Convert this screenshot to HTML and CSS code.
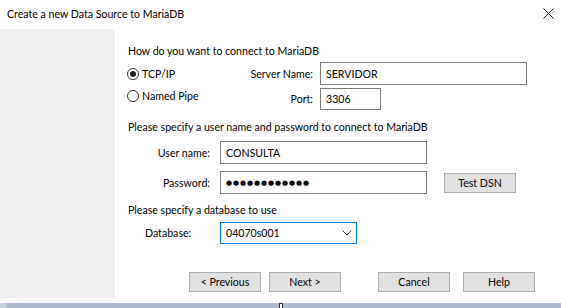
FILE: index.html
```html
<!DOCTYPE html>
<html>
<head>
<meta charset="utf-8">
<link rel="stylesheet" href="styles.css">
</head>
<body>
<div class="window">
  <div class="titlebar">
    <span class="title">Create a new Data Source to MariaDB</span>
    <svg class="close" width="11" height="11" viewBox="0 0 11 11"><path d="M0.5 0.5L10.5 10.5M10.5 0.5L0.5 10.5" stroke="#1a1a1a" stroke-width="1"/></svg>
  </div>
  <div class="main">
    <div class="side"></div>
    <div class="content">
      <p class="q q1">How do you want to connect to MariaDB</p>
      <div class="conn">
        <label class="radio"><span class="circle checked"></span>TCP/IP</label>
        <span class="lbl">Server Name:</span>
        <div class="field server">SERVIDOR</div>
        <label class="radio radio2"><span class="circle"></span>Named Pipe</label>
        <span class="lbl">Port:</span>
        <div class="field port">3306</div>
      </div>
      <p class="q q2">Please specify a user name and password to connect to MariaDB</p>
      <div class="cred">
        <span class="lbl">User name:</span>
        <div class="field user">CONSULTA</div>
        <span></span>
        <span class="lbl">Password:</span>
        <div class="field pass"><span class="dots">●●●●●●●●●●●●</span></div>
        <button class="btn test">Test DSN</button>
      </div>
      <p class="q q3">Please specify a database to use</p>
      <div class="dbrow">
        <span class="dblbl">Database:</span>
        <div class="select"><span>04070s001</span><svg width="10" height="6" viewBox="0 0 10 6"><path d="M0.5 0.5L5 5L9.5 0.5" fill="none" stroke="#333" stroke-width="1"/></svg></div>
      </div>
      <div class="buttons">
        <button class="btn">&lt; Previous</button>
        <button class="btn">Next &gt;</button>
        <button class="btn cancel">Cancel</button>
        <button class="btn help">Help</button>
      </div>
    </div>
  </div>
  <div class="strip"><span class="light"></span><span class="marker"></span></div>
</div>
</body>
</html>
```

FILE: styles.css
```css
* { box-sizing: border-box; }
html, body { margin: 0; padding: 0; }
body {
  width: 561px;
  height: 308px;
  overflow: hidden;
  background: #fff;
  font-family: Lato, "Liberation Sans", sans-serif;
  font-size: 10.6px;
  color: #000;
}
.window { width: 561px; height: 308px; display: flex; flex-direction: column; }
.titlebar {
  height: 29px;
  display: flex;
  align-items: center;
  justify-content: space-between;
  padding: 0 7px 2px 7px;
}
.title { font-size: 10.6px; }
.main { height: 274px; display: flex; }
.side { width: 115px; height: 269px; background: #f0f0f0; flex: none; }
.content { flex: 1; display: flex; flex-direction: column; }
.q { margin: 0; line-height: 16px; height: 16px; padding-left: 13px; }
.q1 { margin-top: 14px; }
.conn {
  margin-top: 3px;
  padding-left: 12px;
  display: grid;
  grid-template-columns: 110px 83px 207px;
  grid-template-rows: 23px 22px;
  row-gap: 3px;
  align-items: center;
}
.radio { display: flex; align-items: center; gap: 3px; }
.radio2 { margin-bottom: 7px; }
.circle {
  width: 12px; height: 12px;
  border: 1px solid #333;
  border-radius: 50%;
  display: flex; align-items: center; justify-content: center;
  background: #fff;
}
.circle.checked::after {
  content: "";
  width: 6px; height: 6px;
  border-radius: 50%;
  background: #1a1a1a;
}
.lbl { text-align: right; padding-right: 7px; }
.field {
  height: 100%;
  border: 1px solid #7a7a7a;
  background: #fff;
  display: flex;
  align-items: center;
  padding-left: 5px;
}
.port { width: 61px; }
.q2 { margin-top: 9px; }
.cred {
  margin-top: 6px;
  display: grid;
  grid-template-columns: 95px 207px 72px;
  grid-template-rows: 23px 23px;
  column-gap: 10px;
  row-gap: 7px;
  align-items: center;
}
.cred .lbl { padding-right: 0; }
.cred .btn { margin-left: 7px; }
.dots {
  font-family: "DejaVu Sans", sans-serif;
  font-size: 7px;
  letter-spacing: 0.9px;
}
.btn {
  width: 72px;
  height: 20px;
  border: 1px solid #adadad;
  background: #e1e1e1;
  font-family: inherit;
  font-size: 10.6px;
  color: #000;
  padding: 0;
  margin: 0;
}
.q3 { margin-top: 8px; }
.dbrow {
  margin-top: 4px;
  display: grid;
  grid-template-columns: 95px 137px;
  column-gap: 10px;
  height: 22px;
  align-items: center;
}
.dblbl { padding-left: 30px; }
.select {
  height: 22px;
  border: 1px solid #0078d7;
  display: flex;
  align-items: center;
  justify-content: space-between;
  padding: 0 4px 0 5px;
}
.buttons {
  margin-top: 28px;
  padding-left: 74px;
  display: flex;
  gap: 8px;
}
.buttons .cancel { margin-left: 29px; }
.buttons .help { margin-left: 5px; }
.strip {
  height: 5px;
  background: #aebbd1;
  display: flex;
}
.light { width: 6px; height: 5px; background: #c9d1e0; }
.marker {
  margin-left: 273px;
  width: 4px; height: 5px;
  background: #fff;
  border: 1px solid #333;
  border-bottom: none;
}
```
